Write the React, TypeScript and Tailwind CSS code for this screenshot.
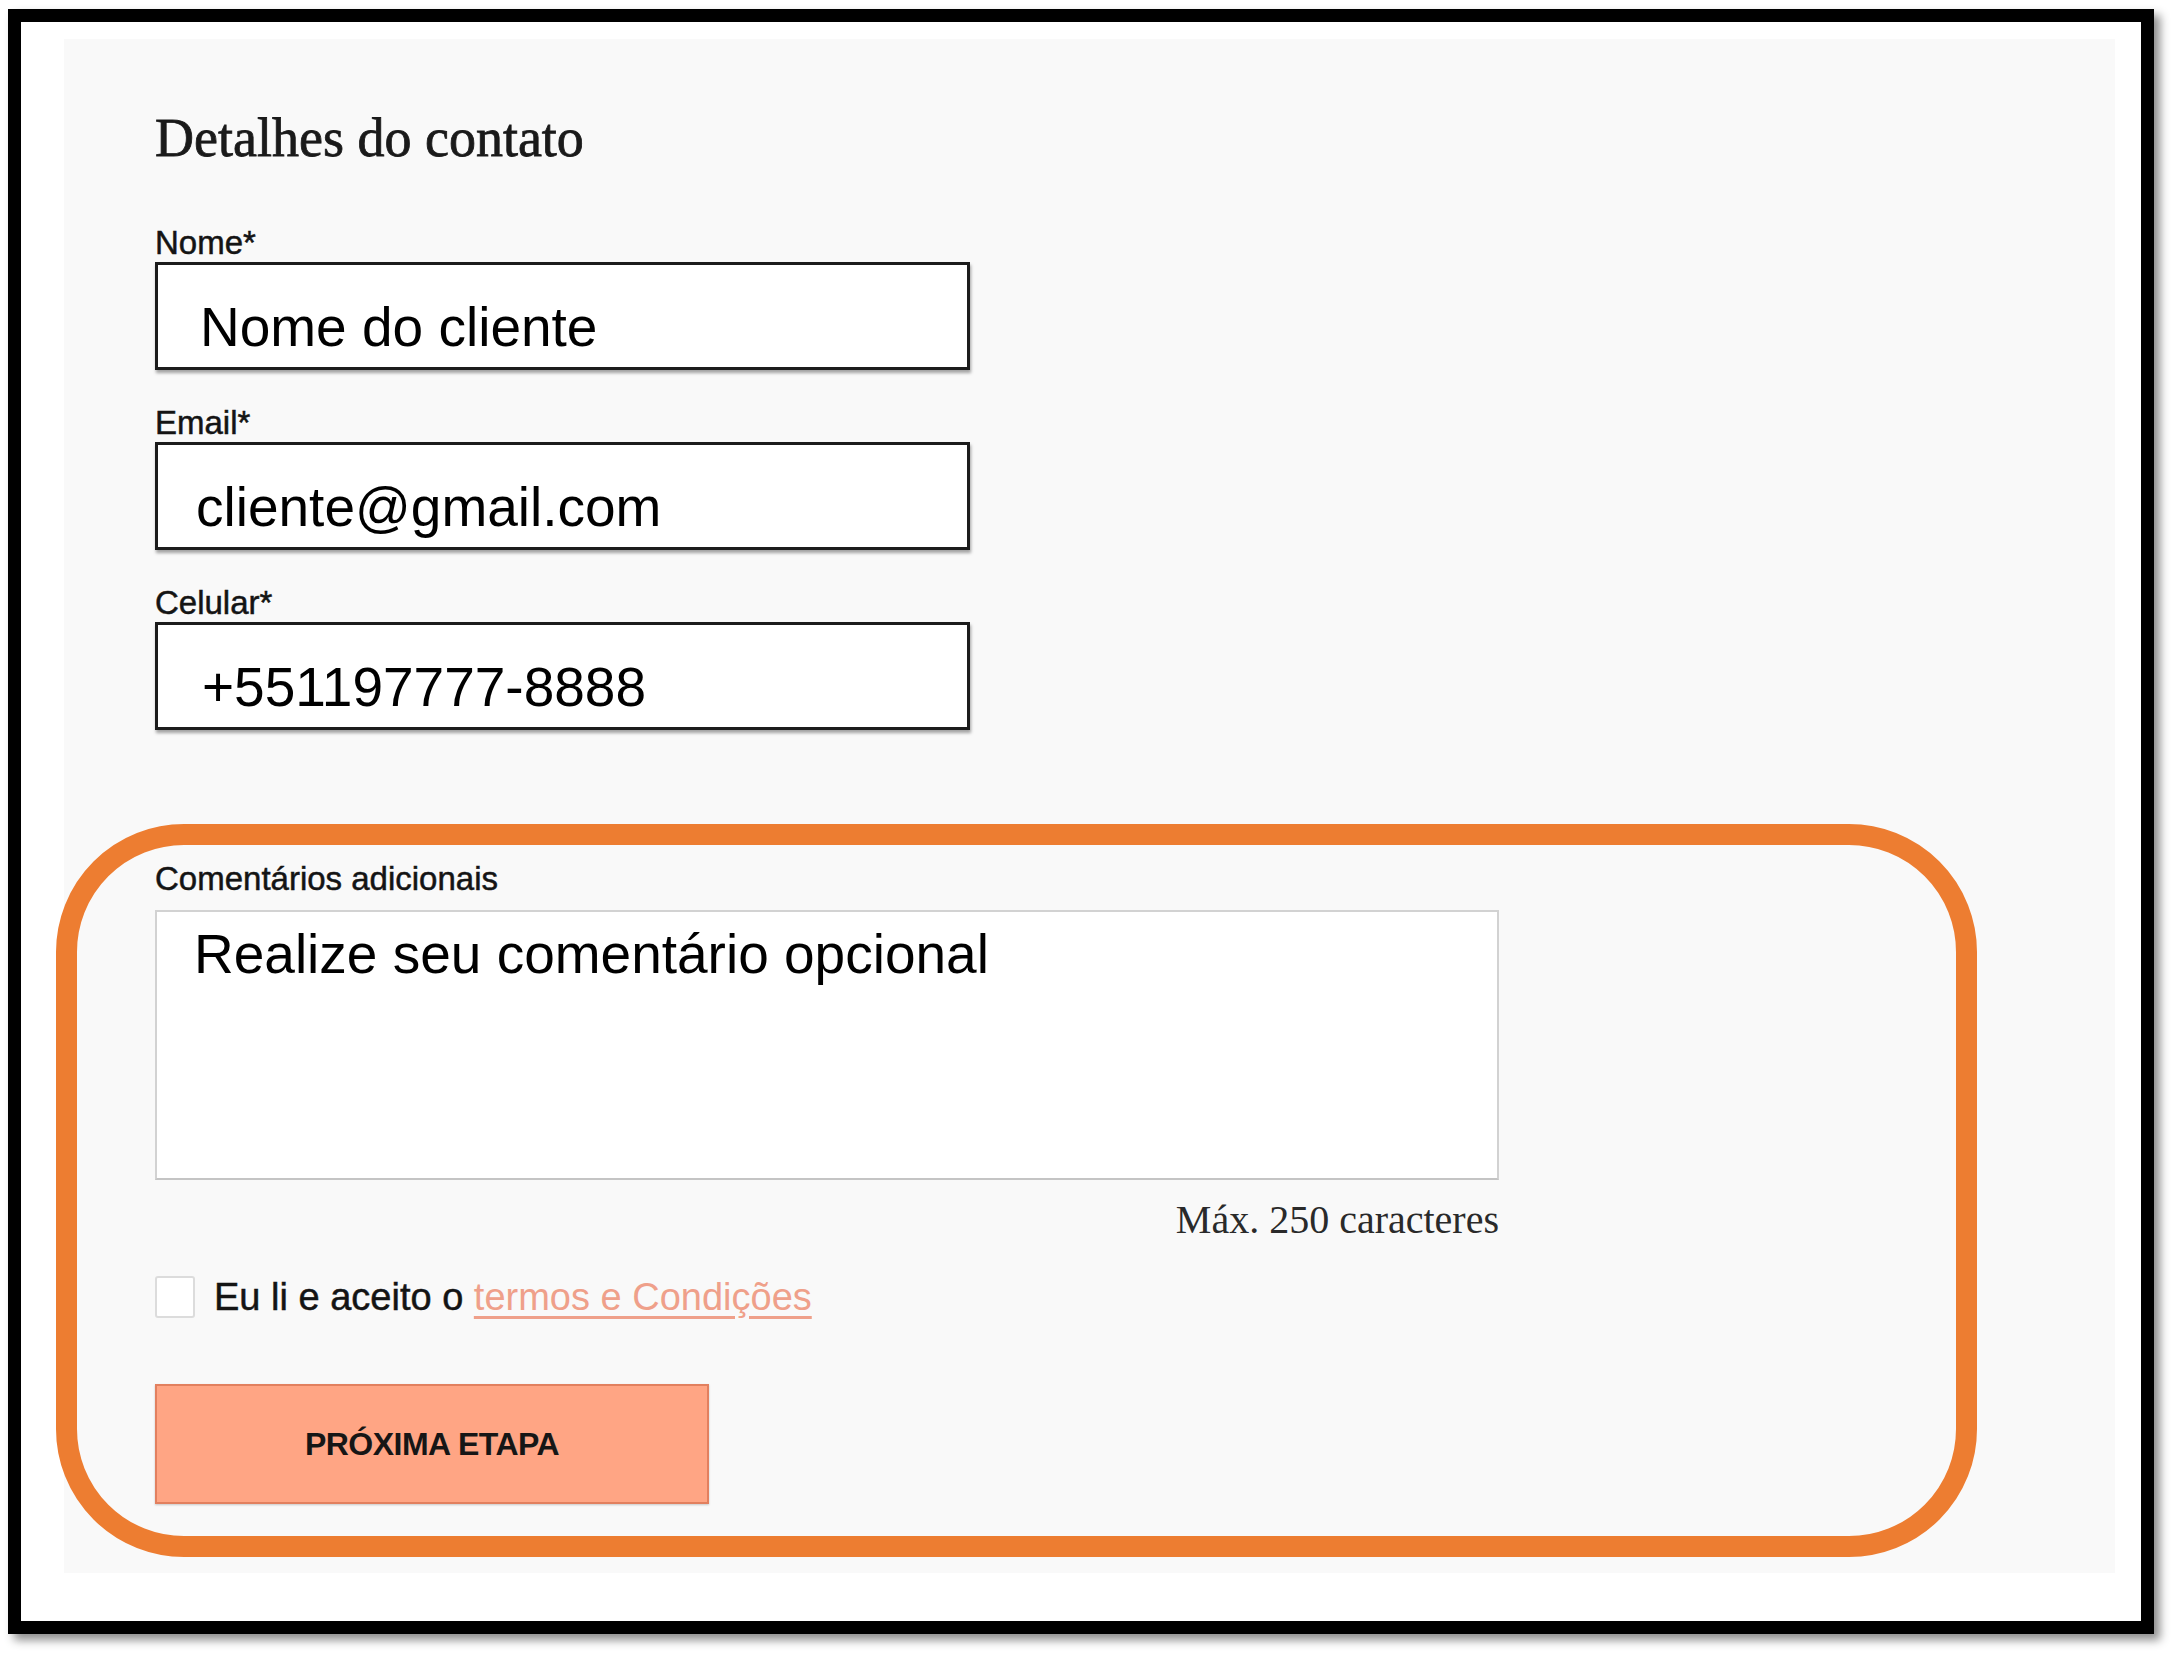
import { useState } from "react";

const sans = { fontFamily: '"Liberation Sans", Arial, sans-serif' };
const serif = { fontFamily: '"Liberation Serif", "Times New Roman", serif' };

type Field = { label: string; value: string; pad: string };

const fields: Field[] = [
  { label: "Nome*", value: "Nome do cliente", pad: "pl-[42px]" },
  { label: "Email*", value: "cliente@gmail.com", pad: "pl-[38px]" },
  { label: "Celular*", value: "+551197777-8888", pad: "pl-[44px]" },
];

function Label({ children }: { children: string }) {
  return (
    <div className="text-[33px] leading-none text-[#141414] [-webkit-text-stroke:0.5px_#141414]" style={sans}>
      {children}
    </div>
  );
}

function TextField({ field }: { field: Field }) {
  return (
    <div className="flex flex-col gap-[3px]">
      <Label>{field.label}</Label>
      <div
        className={`box-border h-[108px] w-[815px] border-[3px] border-[#1c1c1c] bg-white pt-[35px] shadow-[1px_3px_3px_rgba(0,0,0,0.35)] ${field.pad}`}
      >
        <div className="text-[55px] leading-none text-black" style={sans}>
          {field.value}
        </div>
      </div>
    </div>
  );
}

export default function App() {
  const [accepted, setAccepted] = useState(false);

  return (
    <div className="min-h-screen bg-white pl-[8px] pt-[9px]">
      <div className="box-border h-[1625px] w-[2146px] border-[13px] border-black bg-white shadow-[6px_6px_9px_rgba(0,0,0,0.45)]">
        <div className="ml-[43px] mt-[17px] flex h-[1534px] w-[2051px] flex-col bg-[#f9f9f9]">
          <div className="flex flex-col pl-[91px] pt-[72px]">
            <h2 className="text-[54px] leading-none text-[#1a1a1a] [-webkit-text-stroke:0.8px_#1a1a1a]" style={serif}>
              Detalhes do contato
            </h2>
            <div className="mt-[61px] flex flex-col gap-[36px]">
              {fields.map((f) => (
                <TextField key={f.label} field={f} />
              ))}
            </div>
          </div>

          <div className="ml-[-8px] mt-[94px] box-border h-[733px] w-[1921px] rounded-[128px] border-[21px] border-[#ED7D31] pl-[78px] pt-[17px]">
            <Label>Comentários adicionais</Label>
            <div className="mt-[15px] box-border h-[270px] w-[1344px] border-2 border-[#d2d2d2] border-b-[#c4c4c4] bg-white pl-[37px] pt-[15px]">
              <div className="text-[55px] leading-none text-black" style={sans}>
                Realize seu comentário opcional
              </div>
            </div>
            <div className="mt-[20px] w-[1344px] text-right text-[40px] leading-none text-[#2a2a2a]" style={serif}>
              Máx. 250 caracteres
            </div>
            <label className="mt-[36px] flex cursor-pointer items-center gap-[19px]">
              <span
                onClick={() => setAccepted(!accepted)}
                className="box-border flex h-[42px] w-[40px] items-center justify-center rounded-[3px] border-2 border-[#dcdcdc] bg-white text-[28px] text-[#ED7D31]"
              >
                {accepted ? "✓" : ""}
              </span>
              <span className="text-[38px] leading-none text-[#141414]" style={sans}>
                <span className="[-webkit-text-stroke:0.5px_#141414]">Eu li e aceito o</span>{" "}
                <a className="text-[#EFA08A] underline decoration-[#EFA08A] underline-offset-[6px]" href="#">
                  termos e Condições
                </a>
              </span>
            </label>
            <button
              type="button"
              className="mt-[66px] box-border flex h-[120px] w-[554px] items-center justify-center border-2 border-[#E2805F] bg-[#FFA584] text-[32px] font-bold leading-none tracking-[-0.5px] text-[#161616] shadow-[0_1px_2px_rgba(0,0,0,0.2)]"
              style={sans}
            >
              PRÓXIMA ETAPA
            </button>
          </div>
        </div>
      </div>
    </div>
  );
}
